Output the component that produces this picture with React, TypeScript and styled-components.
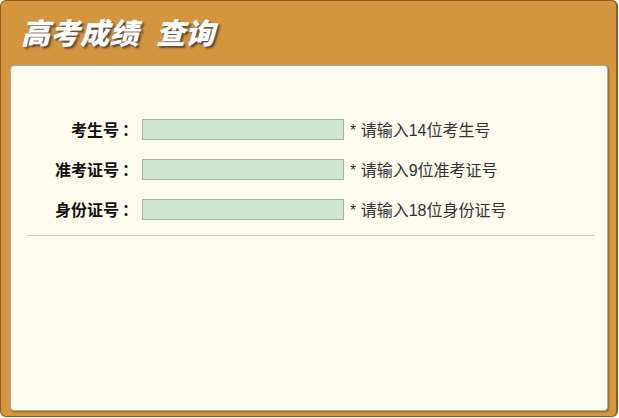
import styled, { createGlobalStyle } from "styled-components"

const GlobalStyle = createGlobalStyle`
    html, body {
        margin: 0;
        padding: 0;
        background: #ffffff;
    }
    body {
        font-family: "Liberation Sans", "Noto Sans CJK SC", sans-serif;
    }
`

type Field = {
    label: string
    hint: string
}

const fields: Field[] = [
    { label: "考生号", hint: "* 请输入14位考生号" },
    { label: "准考证号", hint: "* 请输入9位准考证号" },
    { label: "身份证号", hint: "* 请输入18位身份证号" },
]

export default function App() {
    return (
        <>
            <GlobalStyle />
            <Frame>
                <Header>
                    <Title>
                        高考成绩<Gap />查询
                    </Title>
                </Header>
                <Panel>
                    <Form>
                        {fields.map((f) => (
                            <Row key={f.label}>
                                <Label>
                                    {f.label}
                                    <Colon>：</Colon>
                                </Label>
                                <Input type="text" />
                                <Hint>{f.hint}</Hint>
                            </Row>
                        ))}
                    </Form>
                    <Divider />
                </Panel>
            </Frame>
        </>
    )
}

const Frame = styled.div`
    box-sizing: border-box;
    width: 618px;
    height: 417px;
    background: #d4953f;
    border: 1px solid #8d5c1e;
    border-right-width: 2px;
    border-radius: 6px;
    display: flex;
    flex-direction: column;
`

const Header = styled.div`
    height: 64px;
    display: flex;
    align-items: center;
    padding-left: 20px;
    padding-bottom: 4px;
    box-sizing: border-box;
`

const Title = styled.h1`
    margin: 0;
    font-family: "Noto Sans CJK SC", sans-serif;
    font-size: 29px;
    font-weight: 900;
    font-style: italic;
    color: #ffffff;
    text-shadow: 2px 2px 2px #5a4a3a;
    letter-spacing: 0.5px;
    display: flex;
`

const Gap = styled.span`
    width: 17px;
`

const Panel = styled.div`
    box-sizing: border-box;
    height: 346px;
    margin: 0 8px 0 9px;
    background: #fdfaee;
    border: 1px solid #b3ab9c;
    border-radius: 4px;
    box-shadow: 1px 1px 2px rgba(0, 0, 0, 0.35);
`

const Form = styled.div`
    padding-top: 43px;
    display: flex;
    flex-direction: column;
`

const Row = styled.div`
    height: 40px;
    display: flex;
    align-items: center;
`

const Label = styled.label`
    width: 130px;
    margin-right: 1px;
    text-align: right;
    font-family: "Noto Sans CJK SC", sans-serif;
    font-size: 16px;
    font-weight: 700;
    color: #111111;
    white-space: nowrap;
`

const Colon = styled.span`
    display: inline-block;
    width: 22px;
    text-align: center;
`

const Input = styled.input`
    box-sizing: border-box;
    width: 202px;
    height: 21px;
    margin: 0;
    padding: 0 4px;
    background: #cde8d0;
    border: 1px solid #a9aea8;
    outline: none;
`

const Hint = styled.span`
    margin-left: 6px;
    font-family: "Liberation Sans", "Noto Sans CJK SC", sans-serif;
    font-size: 16px;
    color: #333333;
    white-space: nowrap;
`

const Divider = styled.div`
    margin: 6px 13px 0 16px;
    height: 1px;
    background: #c9c4b8;
`
